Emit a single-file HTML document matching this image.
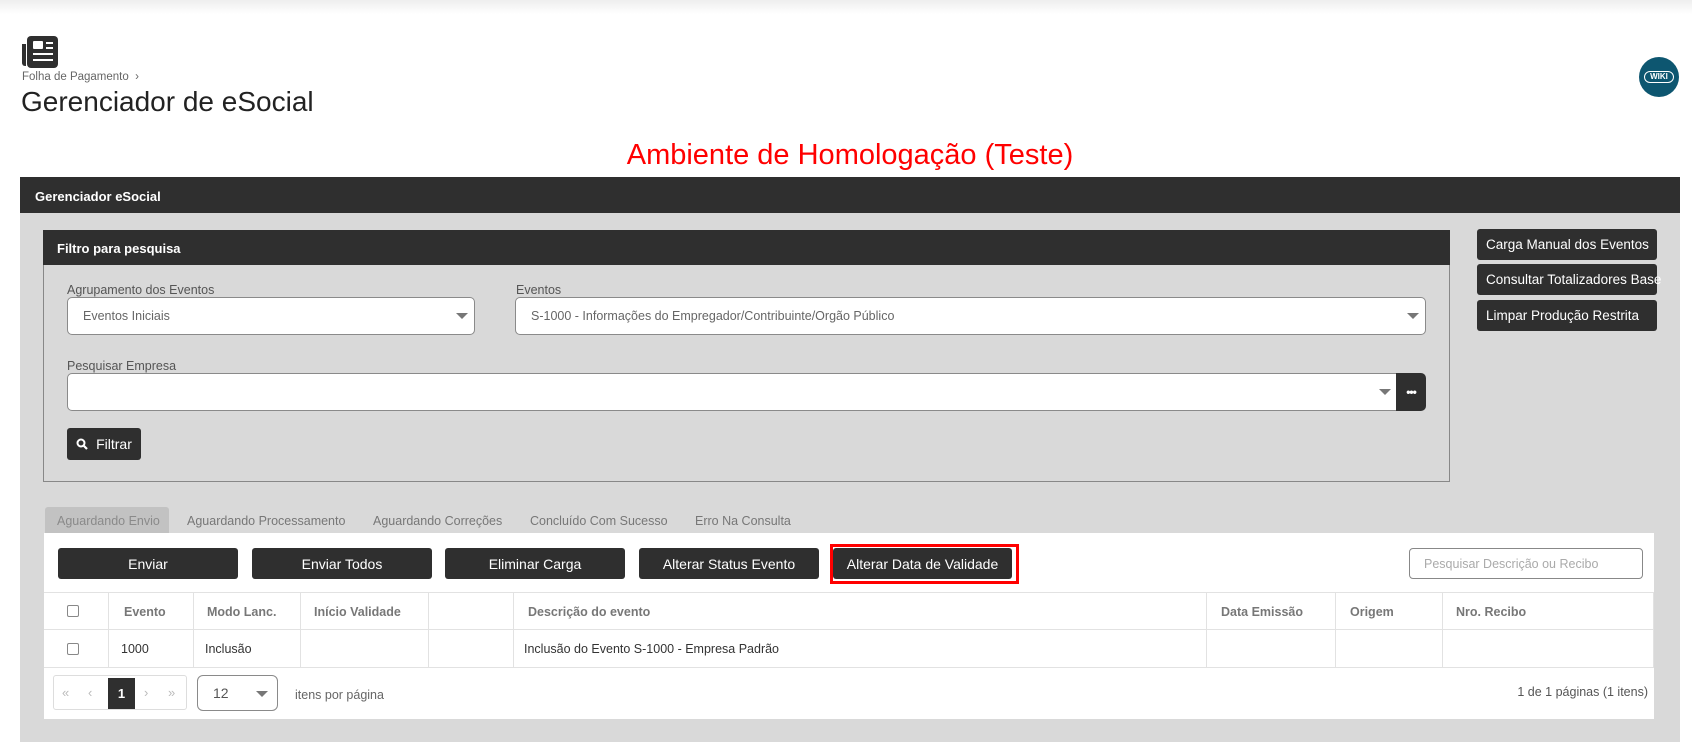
<!DOCTYPE html>
<html><head><meta charset="utf-8"><style>
*{box-sizing:border-box;margin:0;padding:0}
body{width:1692px;height:748px;background:#fff;font-family:"Liberation Sans",Arial,sans-serif;position:relative;overflow:hidden;color:#333}
.a{position:absolute}
.btn{position:absolute;background:#2f2f2f;color:#fff;border-radius:3px;font-size:14px;display:flex;align-items:center;justify-content:center}
.sel{position:absolute;background:#fff;border:1px solid #8a8a8a;border-radius:5px;font-size:12.5px;color:#666;display:flex;align-items:center;padding-left:15px}
.car{position:absolute;width:0;height:0;border-left:6px solid transparent;border-right:6px solid transparent;border-top:6px solid #777}
.lbl{position:absolute;font-size:12.5px;color:#555}
.th{position:absolute;font-size:12.5px;color:#777;font-weight:bold;top:605px}
.td{position:absolute;font-size:12.5px;color:#333;top:642px}
.vl{position:absolute;width:1px;background:#e2e2e2;top:592px;height:75px}
.cb{position:absolute;width:12px;height:12px;border:1px solid #888;border-radius:2px;background:#fff;left:67px}
.tab{position:absolute;top:514px;font-size:12.5px;color:#777}
</style></head><body>
<div class="a" style="left:0;top:0;width:1692px;height:14px;background:linear-gradient(#eee,#fff)"></div>
<svg class="a" style="left:22px;top:36px" width="36" height="32" viewBox="0 0 36 32"><rect x="5" y="0" width="31" height="32" rx="4" fill="#2f2f2f"/><path d="M0 8h4v22h-1a3 3 0 0 1-3-3z" fill="#2f2f2f"/><rect x="11" y="5" width="10" height="8" rx="1" fill="#fff"/><rect x="24" y="6" width="7" height="2" fill="#fff"/><rect x="24" y="11" width="7" height="2" fill="#fff"/><rect x="11" y="17" width="20" height="2" fill="#fff"/><rect x="11" y="23" width="20" height="2" fill="#fff"/></svg>
<div class="a" style="left:22px;top:71px;font-size:11.5px;color:#666">Folha de Pagamento &nbsp;›</div>
<div class="a" style="left:21px;top:86px;font-size:28px;color:#222">Gerenciador de eSocial</div>
<div class="a" style="left:1639px;top:57px;width:40px;height:40px;border-radius:50%;background:#0d5670;overflow:hidden"><div class="a" style="left:5px;top:14px;width:30px;height:12px;border:1.5px solid #fff;border-radius:6px;color:#fff;font-size:8px;font-weight:bold;text-align:center;line-height:9px">WIKI</div></div>
<div class="a" style="left:0;width:1692px;top:139px;text-align:center;font-size:29px;color:#f00;padding-left:8px">Ambiente de Homologação (Teste)</div>
<div class="a" style="left:20px;top:177px;width:1660px;height:565px;background:#d9d9d9"></div>
<div class="a" style="left:20px;top:177px;width:1660px;height:36px;background:#2f2f2f;color:#fff;font-weight:bold;font-size:13px;padding:12px 0 0 15px">Gerenciador eSocial</div>
<div class="a" style="left:43px;top:230px;width:1407px;height:252px;border:1px solid #888;border-top:none"></div>
<div class="a" style="left:43px;top:230px;width:1407px;height:35px;background:#2f2f2f;color:#fff;font-weight:bold;font-size:13px;padding:11px 0 0 14px">Filtro para pesquisa</div>
<div class="lbl" style="left:67px;top:283px">Agrupamento dos Eventos</div>
<div class="lbl" style="left:516px;top:283px">Eventos</div>
<div class="sel" style="left:67px;top:297px;width:408px;height:38px">Eventos Iniciais</div><div class="car" style="left:456px;top:313px"></div>
<div class="sel" style="left:515px;top:297px;width:911px;height:38px">S-1000 - Informações do Empregador/Contribuinte/Orgão Público</div><div class="car" style="left:1407px;top:313px"></div>
<div class="lbl" style="left:67px;top:359px">Pesquisar Empresa</div>
<div class="sel" style="left:67px;top:373px;width:1335px;height:38px;border-radius:5px 0 0 5px"></div><div class="car" style="left:1379px;top:389px"></div>
<div class="btn" style="left:1396px;top:373px;width:30px;height:38px;border-radius:0 5px 5px 0;font-size:12px;font-weight:bold;letter-spacing:-1px">•••</div>
<div class="btn" style="left:67px;top:428px;width:74px;height:32px"><svg width="12" height="12" viewBox="0 0 12 12" style="margin-right:8px"><circle cx="5" cy="5" r="3.5" fill="none" stroke="#fff" stroke-width="2"/><path d="M7.5 7.5L11 11" stroke="#fff" stroke-width="2.2"/></svg>Filtrar</div>
<div class="btn" style="left:1477px;top:229px;width:180px;height:31px;justify-content:flex-start;padding-left:9px;font-size:13.5px">Carga Manual dos Eventos</div>
<div class="btn" style="left:1477px;top:264px;width:180px;height:31px;justify-content:flex-start;padding-left:9px;white-space:nowrap;overflow:visible;font-size:13.5px">Consultar Totalizadores Base</div>
<div class="btn" style="left:1477px;top:300px;width:180px;height:31px;justify-content:flex-start;padding-left:9px;font-size:13.5px">Limpar Produção Restrita</div>
<div class="a" style="left:45px;top:507px;width:124px;height:26px;background:#c2c2c2;border-radius:3px 3px 0 0"></div>
<div class="tab" style="left:57px;color:#8a8a8a">Aguardando Envio</div>
<div class="tab" style="left:187px">Aguardando Processamento</div>
<div class="tab" style="left:373px">Aguardando Correções</div>
<div class="tab" style="left:530px">Concluído Com Sucesso</div>
<div class="tab" style="left:695px">Erro Na Consulta</div>
<div class="a" style="left:44px;top:533px;width:1610px;height:186px;background:#fff"></div>
<div class="btn" style="left:58px;top:548px;width:180px;height:31px">Enviar</div>
<div class="btn" style="left:252px;top:548px;width:180px;height:31px">Enviar Todos</div>
<div class="btn" style="left:445px;top:548px;width:180px;height:31px">Eliminar Carga</div>
<div class="btn" style="left:639px;top:548px;width:180px;height:31px">Alterar Status Evento</div>
<div class="a" style="left:830px;top:544px;width:189px;height:40px;border:3px solid #f00"></div>
<div class="btn" style="left:833px;top:548px;width:179px;height:31px">Alterar Data de Validade</div>
<div class="a" style="left:1409px;top:548px;width:234px;height:31px;border:1px solid #888;border-radius:4px;font-size:12.5px;color:#aaa;padding:8px 0 0 14px">Pesquisar Descrição ou Recibo</div>
<div class="a" style="left:44px;top:592px;width:1610px;height:1px;background:#e2e2e2"></div>
<div class="a" style="left:44px;top:629px;width:1610px;height:1px;background:#e2e2e2"></div>
<div class="a" style="left:44px;top:667px;width:1610px;height:1px;background:#e2e2e2"></div>
<div class="vl" style="left:108px"></div><div class="vl" style="left:193px"></div><div class="vl" style="left:300px"></div><div class="vl" style="left:428px"></div><div class="vl" style="left:513px"></div><div class="vl" style="left:1206px"></div><div class="vl" style="left:1335px"></div><div class="vl" style="left:1442px"></div><div class="vl" style="left:1653px"></div>
<div class="cb" style="top:605px"></div><div class="cb" style="top:643px"></div>
<div class="th" style="left:124px">Evento</div><div class="th" style="left:207px">Modo Lanc.</div><div class="th" style="left:314px">Início Validade</div><div class="th" style="left:528px">Descrição do evento</div><div class="th" style="left:1221px">Data Emissão</div><div class="th" style="left:1350px">Origem</div><div class="th" style="left:1456px">Nro. Recibo</div>
<div class="td" style="left:121px">1000</div><div class="td" style="left:205px">Inclusão</div><div class="td" style="left:524px">Inclusão do Evento S-1000 - Empresa Padrão</div>
<div class="a" style="left:53px;top:675px;width:134px;height:35px;border:1px solid #ddd;border-radius:3px;font-size:13px;color:#bbb"><span class="a" style="left:8px;top:9px">«</span><span class="a" style="left:34px;top:9px">‹</span><span class="a" style="left:54px;top:2px;width:27px;height:31px;background:#2f2f2f;color:#fff;text-align:center;padding-top:8px;font-weight:bold">1</span><span class="a" style="left:90px;top:9px">›</span><span class="a" style="left:114px;top:9px">»</span></div>
<div class="sel" style="left:197px;top:675px;width:81px;height:36px;border-radius:6px;color:#555;font-size:14px">12</div><div class="car" style="left:256px;top:691px"></div>
<div class="a" style="left:295px;top:688px;font-size:12.5px;color:#666">itens por página</div>
<div class="a" style="left:1400px;top:685px;width:248px;text-align:right;font-size:12.5px;color:#555">1 de 1 páginas (1 itens)</div>
</body></html>
